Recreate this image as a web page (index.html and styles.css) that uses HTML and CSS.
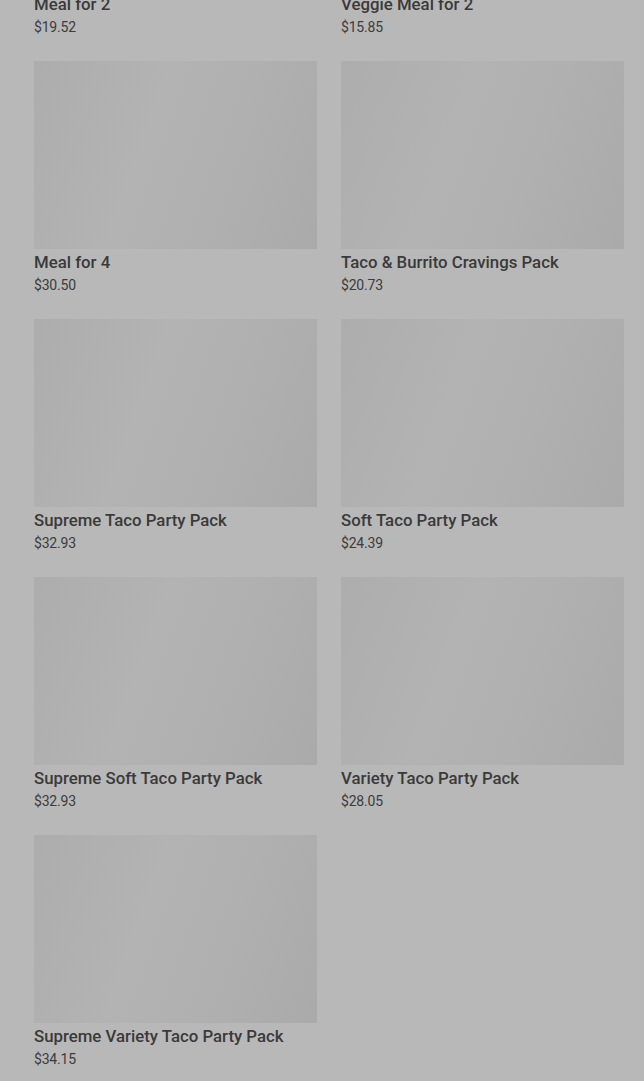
FILE: index.html
```html
<!DOCTYPE html>
<html lang="en">
<head>
<meta charset="utf-8">
<title>Menu</title>
<link rel="stylesheet" href="styles.css">
</head>
<body>
<main class="page">
  <div class="grid">
    <div class="card"><div class="thumb"></div><div class="name">Meal for 2</div><div class="price">$19.52</div></div>
    <div class="card"><div class="thumb"></div><div class="name">Veggie Meal for 2</div><div class="price">$15.85</div></div>
    <div class="card"><div class="thumb"></div><div class="name">Meal for 4</div><div class="price">$30.50</div></div>
    <div class="card"><div class="thumb"></div><div class="name">Taco &amp; Burrito Cravings Pack</div><div class="price">$20.73</div></div>
    <div class="card"><div class="thumb"></div><div class="name">Supreme Taco Party Pack</div><div class="price">$32.93</div></div>
    <div class="card"><div class="thumb"></div><div class="name">Soft Taco Party Pack</div><div class="price">$24.39</div></div>
    <div class="card"><div class="thumb"></div><div class="name">Supreme Soft Taco Party Pack</div><div class="price">$32.93</div></div>
    <div class="card"><div class="thumb"></div><div class="name">Variety Taco Party Pack</div><div class="price">$28.05</div></div>
    <div class="card"><div class="thumb"></div><div class="name">Supreme Variety Taco Party Pack</div><div class="price">$34.15</div></div>
  </div>
</main>
</body>
</html>
```
FILE: styles.css
```css
html, body {
  margin: 0;
  padding: 0;
  background: #b8b8b8;
  height: 100%;
  overflow: hidden;
}
.page {
  padding: 0 20px 0 34px;
  font-family: Roboto, "Liberation Sans", sans-serif;
}
.grid {
  display: grid;
  grid-template-columns: 283px 283px;
  column-gap: 24px;
  row-gap: 23px;
  margin-top: -197px;
}
.card {
  display: flex;
  flex-direction: column;
}
.thumb {
  height: 188px;
  background: linear-gradient(110deg, #adadad 0%, #b3b3b3 40%, #b0b0b0 65%, #aaaaaa 100%);
}
.name {
  margin-top: 2px;
  font-size: 16.8px;
  font-weight: 500;
  line-height: 22px;
  color: #3a3a3a;
}
.price {
  padding-top: 1px;
  font-size: 14px;
  line-height: 22px;
  color: #3c3c3c;
  letter-spacing: -0.2px;
}
```
